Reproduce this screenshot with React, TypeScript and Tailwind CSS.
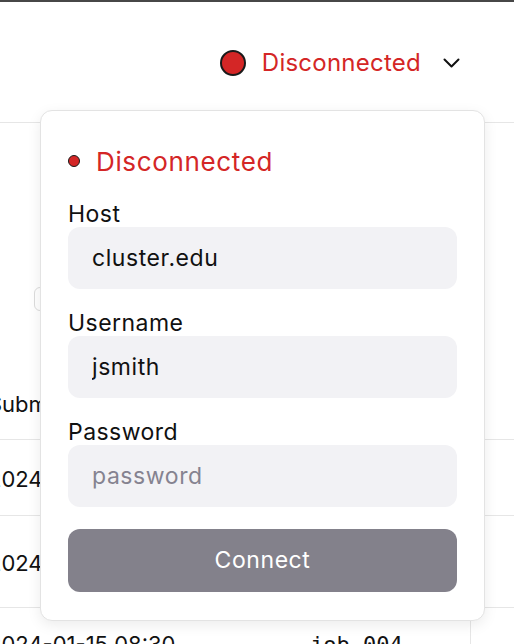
import React from "react";

type FieldProps = {
  label: string;
  value?: string;
  placeholder?: string;
  type?: string;
};

const Field = ({ label, value, placeholder, type = "text" }: FieldProps) => (
  <label className="flex flex-col">
    <span className="h-[25px] text-[23px] leading-[25px] tracking-[0.02em] text-[#111]">{label}</span>
    <input
      type={type}
      defaultValue={value}
      placeholder={placeholder}
      className="h-[62px] w-full rounded-[12px] bg-[#f2f2f5] px-[24px] text-[23px] tracking-[0.025em] text-[#111] outline-none placeholder:text-[#858390]"
    />
  </label>
);

const rows = [
  { date: "2024-01-15 10:45", job: "job_002", h: "h-[76px]" },
  { date: "2024-01-15 09:12", job: "job_003", h: "h-[92px]" },
  { date: "2024-01-15 08:30", job: "job_004", h: "h-[60px]" },
];

export default function App() {
  return (
    <div className="relative h-[644px] w-[514px] overflow-hidden bg-white font-['Inter',sans-serif] text-[#111]">
      <div className="h-[2px] bg-[#474747]" />

      {/* header */}
      <header className="flex h-[121px] items-center justify-end border-b border-[#e6e6e6] pr-[54px] pt-[2px]">
        <button className="flex items-center">
          <span className="h-[26px] w-[26px] rounded-full border-2 border-[#1a1a1a] bg-[#d42626]" />
          <span className="ml-[16px] text-[24px] tracking-[0.01em] text-[#d42626]">Disconnected</span>
          <svg className="ml-[22px]" width="17" height="10" viewBox="0 0 17 10" fill="none">
            <path d="M1.5 1.5l7 7 7-7" stroke="#111" strokeWidth="2" strokeLinecap="round" strokeLinejoin="round" />
          </svg>
        </button>
      </header>

      {/* page content under the popover */}
      <div className="ml-[34px] mt-[164px] h-[24px] w-[220px] rounded-md border border-[#dcdcdc]" />

      <div className="ml-[-12px] mt-[59px] w-[530px] text-[22px]">
        <div className="flex h-[70px] items-center border-b border-[#e6e6e6]">
          <span className="w-[322px]">Submitted</span>
          <span className="w-[161px] border-r border-[#e6e6e6]">Job</span>
        </div>
        {rows.map((r) => (
          <div key={r.job} className={`flex border-b border-[#e6e6e6] ${r.h}`}>
            <span className={`flex w-[322px] ${r.job === "job_004" ? "pt-[20px]" : "items-center pt-[3px]"}`}>{r.date}</span>
            <span
              className={`flex w-[161px] border-r border-[#e6e6e6] font-['DejaVu_Sans_Mono',monospace] ${r.job === "job_004" ? "pt-[20px]" : "items-center"}`}
            >
              {r.job}
            </span>
          </div>
        ))}
      </div>

      {/* connection popover */}
      <div className="absolute left-[40px] top-[110px] w-[445px] rounded-[12px] border border-[#e3e3e3] bg-white px-[27px] pt-[28px] pb-[28px] shadow-[0_4px_14px_rgba(0,0,0,0.08)]">
        <div className="mb-[19px] flex h-[44px] items-center">
          <span className="h-[12px] w-[12px] rounded-full border border-[#1a1a1a] bg-[#d42626]" />
          <span className="ml-[16px] text-[26px] tracking-[0.025em] text-[#d42626]">Disconnected</span>
        </div>
        <div className="flex flex-col gap-[22px]">
          <Field label="Host" value="cluster.edu" />
          <Field label="Username" value="jsmith" />
          <Field label="Password" placeholder="password" type="password" />
          <button className="h-[63px] w-full rounded-[12px] bg-[#83818b] text-[23px] tracking-[0.025em] text-white">
            Connect
          </button>
        </div>
      </div>
    </div>
  );
}
